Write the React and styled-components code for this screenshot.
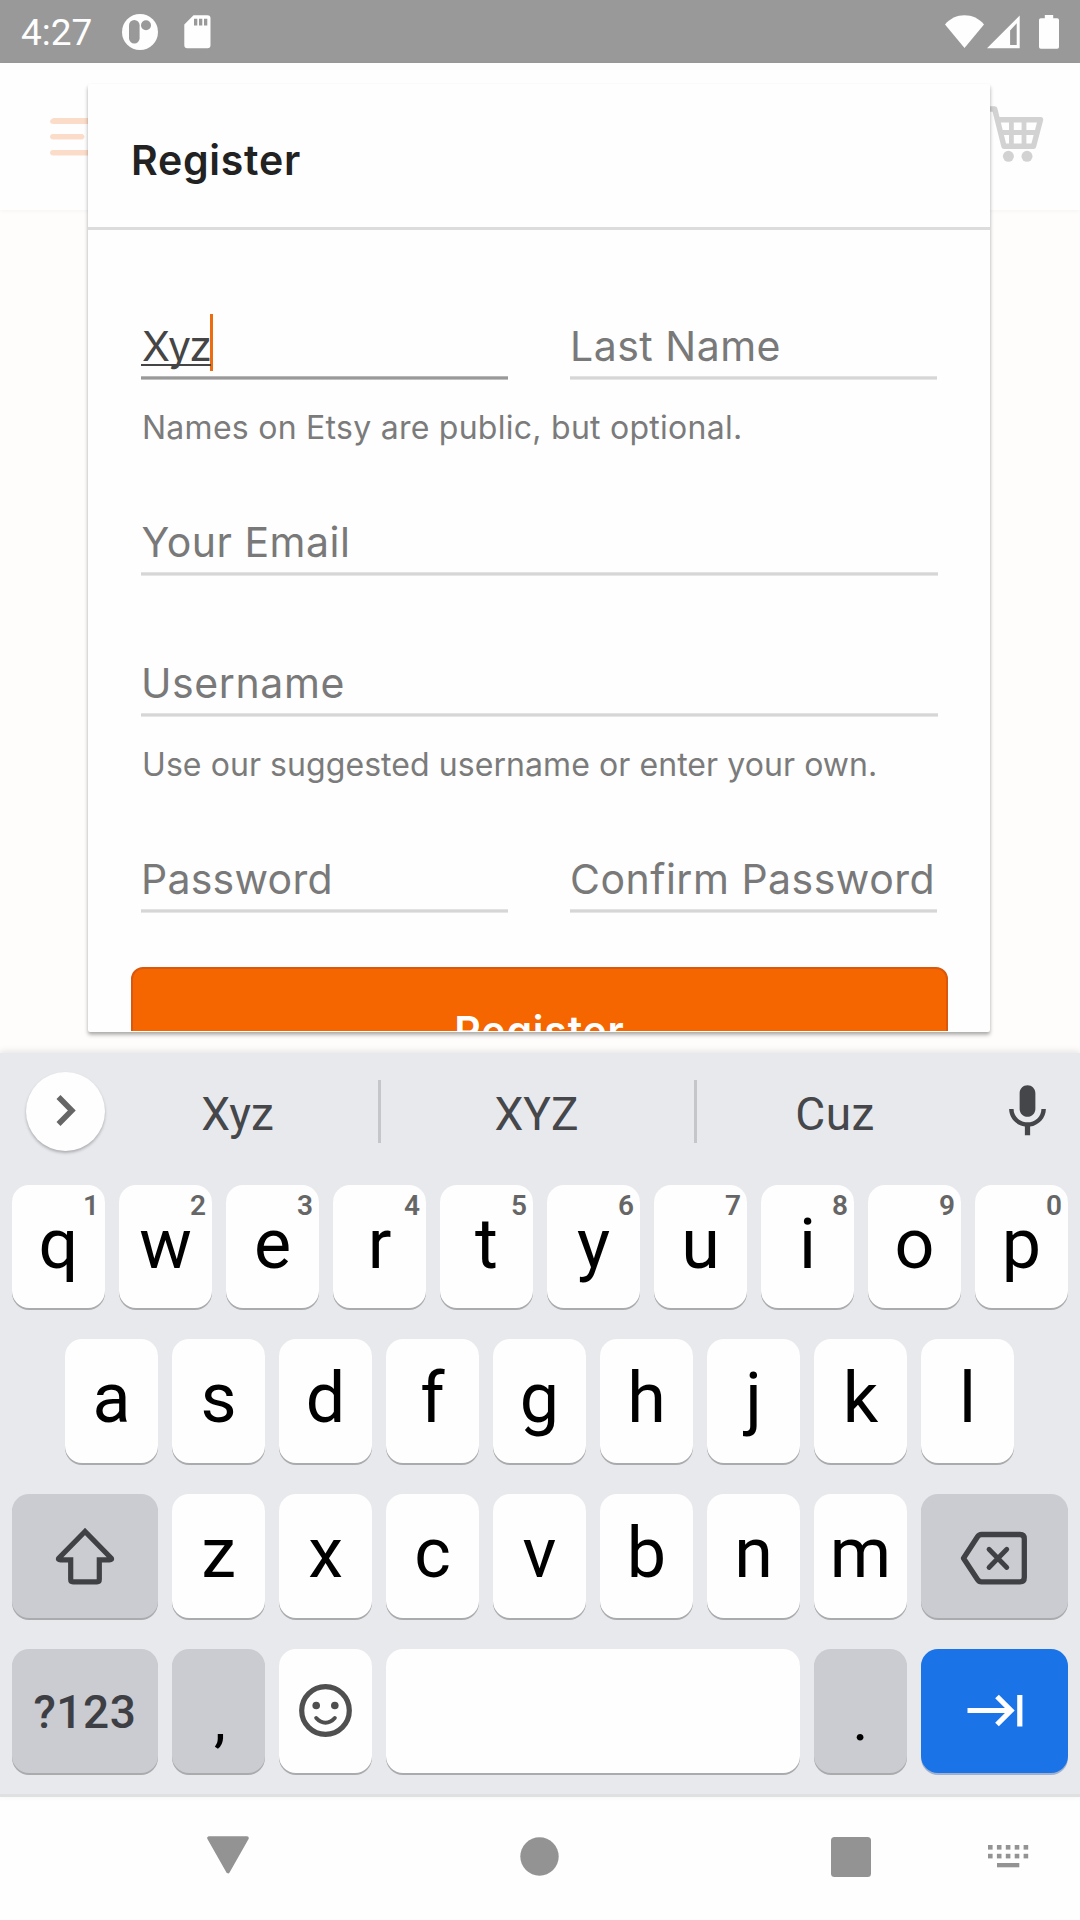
import React from 'react';
import styled, { createGlobalStyle } from 'styled-components';

const GlobalStyle = createGlobalStyle`
  * { box-sizing: border-box; }
  body { margin: 0; background: #fefefe; }
  svg { display: block; flex-shrink: 0; }
`;

const Screen = styled.div`
  display: flex;
  flex-direction: column;
  width: 1080px;
  height: 1920px;
  overflow: hidden;
  background: #fefefe;
  font-family: Roboto, "Liberation Sans", sans-serif;
`;

/* ---------- status bar ---------- */

const StatusBar = styled.header`
  display: flex;
  align-items: center;
  height: 63px;
  padding: 0 21px;
  background: #999999;
  color: #fefefe;
`;

const Clock = styled.span`
  width: 101px;
  padding-top: 3px;
  font-size: 37px;
  line-height: 44px;
`;

const Spacer = styled.div`
  flex: 1;
`;

const Gap = styled.div`
  width: ${(p) => p.$w}px;
`;

/* ---------- app behind the dialog ---------- */

const AppArea = styled.main`
  position: relative;
  height: 990px;
  background: #fefdfb;
`;

const AppBar = styled.div`
  display: flex;
  align-items: center;
  justify-content: space-between;
  height: 147px;
  padding: 0 36px 0 50px;
  background: #fefefe;
  box-shadow: 0 1px 4px rgba(0, 0, 0, 0.04);
`;

const CartSlot = styled.div`
  padding-bottom: 5px;
`;

/* ---------- dialog ---------- */

const Dialog = styled.section`
  position: absolute;
  top: 21px;
  left: 88px;
  width: 902px;
  height: 948px;
  padding-bottom: 1px;
  background: #fefefe;
  border-radius: 2px;
  box-shadow: 0 3px 4px rgba(0, 0, 0, 0.24), 0 2px 3px rgba(0, 0, 0, 0.12);
  font-family: Inter, "Liberation Sans", sans-serif;
`;

const DialogContent = styled.div`
  height: 100%;
  overflow: hidden;
`;

const DialogTitle = styled.h1`
  height: 146px;
  margin: 0;
  padding: 46px 0 0 43px;
  border-bottom: 3px solid #dcdcdc;
  color: #222222;
  font-size: 41px;
  font-weight: 600;
  line-height: 60px;
  letter-spacing: 0.75px;
`;

const Form = styled.form`
  display: flex;
  flex-direction: column;
  padding: 89px 52px 0 53px;
`;

const FieldRow = styled.div`
  display: flex;
  justify-content: space-between;
  margin-top: ${(p) => p.$top || 0}px;
  padding-right: ${(p) => (p.$split ? 1 : 0)}px;
`;

const Field = styled.div`
  width: ${(p) => (p.$half ? '367px' : '100%')};
`;

const FieldText = styled.div`
  height: 57px;
  padding-left: ${(p) => p.$inset || 0}px;
  color: #797979;
  font-size: 41px;
  line-height: 54px;
  letter-spacing: ${(p) => p.$spacing || 0.5}px;
  white-space: nowrap;
`;

const lineColor = (p) => (p.$focused ? '153, 153, 153' : '214, 214, 214');

const FieldLine = styled.div`
  height: 4px;
  background: linear-gradient(
    rgba(${lineColor}, 0.7) 25%,
    rgb(${lineColor}) 25% 75%,
    rgba(${lineColor}, 0.6) 75%
  );
`;

const Composing = styled.span`
  position: relative;
  display: inline-block;
  width: 70px;
  height: 54px;
  padding-left: 1px;
  color: #454545;
  letter-spacing: -1.9px;

  &::after {
    content: '';
    position: absolute;
    left: 0;
    right: 0;
    top: 45px;
    height: 2px;
    background: #454545;
  }
`;

const Caret = styled.span`
  position: absolute;
  left: 69px;
  top: -5px;
  width: 3px;
  height: 57px;
  background: #ee6c10;
`;

const Hint = styled.p`
  margin: 26px 0 -1px;
  padding-left: 1px;
  color: #7b7b7b;
  font-size: 32px;
  line-height: 44px;
  letter-spacing: ${(p) => p.$spacing}px;
  white-space: nowrap;
`;

const SubmitButton = styled.div`
  flex-shrink: 0;
  width: 817px;
  height: 129px;
  margin: 54px 0 0 -10px;
  border: 2px solid #d9580e;
  border-radius: 12px;
  background: #f56500;
  color: #fefefe;
  font-size: 41px;
  font-weight: 600;
  line-height: 125px;
  letter-spacing: 0.8px;
  text-align: center;
`;

/* ---------- keyboard ---------- */

const Keyboard = styled.section`
  position: relative;
  display: flex;
  flex-direction: column;
  height: 744px;
  border-bottom: 3px solid #dfe0e0;
  background: #e8e9ed;
  box-shadow: 0 -2px 6px rgba(120, 110, 120, 0.16);
`;

const SuggestionBar = styled.div`
  display: grid;
  grid-template-columns: 105px 273px 3px 313px 3px 278px 105px;
  align-items: center;
  flex-shrink: 0;
  height: 132px;
  padding-bottom: 16px;
`;

const ExpandButton = styled.div`
  display: flex;
  align-items: center;
  justify-content: center;
  width: 79px;
  height: 79px;
  margin-left: 26px;
  border-radius: 50%;
  background: #fefefe;
  box-shadow: 0 2px 3px rgba(0, 0, 0, 0.25);
`;

const Suggestion = styled.div`
  padding: 5px ${(p) => p.$trim || 0}px 0 0;
  color: #45474b;
  font-size: 46px;
  line-height: 60px;
  letter-spacing: ${(p) => p.$spacing || 0}px;
  text-align: center;
`;

const Divider = styled.div`
  height: 63px;
  background: #c4c6c9;
`;

const MicSlot = styled.div`
  padding-left: 21px;
`;

const Keys = styled.div`
  display: flex;
  flex-direction: column;
  gap: 31px;
`;

const KeyRow = styled.div`
  display: flex;
  justify-content: center;
  gap: 14px;
  height: ${(p) => p.$h || 124}px;
  padding-right: ${(p) => p.$shift || 0}px;
`;

const keyTone = {
  light: '#fefefe',
  dark: '#cbccd1',
  action: '#1b73e8',
};

const KeyCap = styled.div`
  position: relative;
  display: flex;
  align-items: center;
  justify-content: center;
  width: ${(p) => p.$w || 93}px;
  border-radius: 17px;
  background: ${(p) => keyTone[p.$tone || 'light']};
  box-shadow: 0 2px 0 ${(p) => (p.$tone === 'action' ? '#9fb1cd' : '#aaabad')};
`;

const Letter = styled.span`
  padding-bottom: 6px;
  color: #000000;
  font-size: 70px;
  line-height: 84px;
`;

const Punctuation = styled.span`
  padding-top: 18px;
  padding-left: ${(p) => p.$inset || 0}px;
  color: #000000;
  font-size: 60px;
  line-height: 74px;
`;

const ModeLabel = styled.span`
  padding-top: 2px;
  color: #3d3f44;
  font-size: 46px;
  font-weight: 500;
  line-height: 60px;
  letter-spacing: 0.6px;
`;

const Digit = styled.span`
  position: absolute;
  top: 5px;
  right: 6px;
  color: #666666;
  font-size: 28px;
  font-weight: 600;
  line-height: 32px;
`;

/* ---------- navigation bar ---------- */

const NavBar = styled.nav`
  display: flex;
  align-items: center;
  height: 123px;
  padding-bottom: 4px;
  background: #fefefe;
`;

/* The back triangle sits slightly above the other nav icons. */
const BackSlot = styled.div`
  padding-bottom: 4px;
`;

/* ---------- icons ---------- */

const NotificationIcon = () => (
  <svg width="36" height="36" viewBox="0 0 36 36">
    <circle cx="18" cy="18" r="18" fill="#fefefe" />
    <rect x="7" y="6" width="10.6" height="23.5" rx="5.3" fill="#999999" />
    <circle cx="24" cy="11.2" r="5" fill="#999999" />
  </svg>
);

const SdCardIcon = () => (
  <svg width="27" height="34" viewBox="0 0 27 34">
    <path
      fill="#fefefe"
      fillRule="evenodd"
      d="M9.5 0.3H23.5a3 3 0 0 1 3 3V30.3a3 3 0 0 1-3 3H3.3a3 3 0 0 1-3-3V9.5zM10 3.7v6.8h3.3V3.7zM15 3.7v6.8h3.3V3.7zM20 3.7v6.8h3.3V3.7z"
    />
  </svg>
);

const WifiIcon = () => (
  <svg width="39" height="34" viewBox="0 0 39 34">
    <path fill="#fefefe" d="M0 9.5C5 3.5 12 0.3 19.5 0.3S34 3.5 39 9.5L19.5 33z" />
  </svg>
);

const SignalIcon = () => (
  <svg width="33" height="34" viewBox="0 0 33 34">
    <path fill="#fefefe" fillRule="evenodd" d="M32.7 0.5V33.2H0zM29.7 8.3L23.1 15.5V29.9H29.7z" />
  </svg>
);

const BatteryIcon = () => (
  <svg width="20" height="34" viewBox="0 0 20 34">
    <path
      fill="#fefefe"
      d="M5.8 0h8.4v3.3h4a1.8 1.8 0 0 1 1.8 1.8V32a1.8 1.8 0 0 1-1.8 1.8H1.800A1.8 1.8 0 0 1 0 32V5.1a1.8 1.8 0 0 1 1.8-1.8h4z"
    />
  </svg>
);

const MenuIcon = () => (
  <svg width="50" height="38" viewBox="0 0 50 38">
    <g fill="#fbdcc9">
      <path d="M3.5 0H50V6H3.500Q0 5.5 0 3.500T3.500 0z" />
      <path d="M3 16H32.500Q34.500 17 34.500 18.700T32.500 21.500H3Q0 21 0 18.700T3 16z" />
      <path d="M3 32H50V37.500H3Q0 37 0 34.700T3 32z" />
    </g>
  </svg>
);

const CartIcon = () => (
  <svg width="62" height="58" viewBox="982 105 62 58" fill="none" stroke="#d2d2d2">
    <path strokeWidth="5.4" strokeLinejoin="round" d="M984 109H994.7L1004 146.300H1033.500L1040.500 119.700H998" />
    <path strokeWidth="4.8" d="M1011.4 120V146M1024 120V146M1001 132.500H1037" />
    <g fill="#d2d2d2" stroke="none">
      <circle cx="1008.4" cy="156.3" r="5.5" />
      <circle cx="1027" cy="156.3" r="5.5" />
    </g>
  </svg>
);

const ChevronIcon = () => (
  <svg width="22" height="34" viewBox="0 0 22 34">
    <path d="M3.5 3L16.8 16.500L3.500 30" fill="none" stroke="#666666" strokeWidth="5.6" strokeLinecap="butt" />
  </svg>
);

const MicIcon = () => (
  <svg width="63" height="63" viewBox="0 0 24 24" fill="#444649">
    <path d="M12 14c1.66 0 3-1.34 3-3V5c0-1.66-1.34-3-3-3S9 3.34 9 5v6c0 1.66 1.34 3 3 3zm5.3-3c0 3-2.54 5.1-5.3 5.1S6.7 14 6.7 11H5c0 3.41 2.72 6.23 6 6.72V21h2v-3.28c3.28-.48 6-3.3 6-6.72h-1.7z" />
  </svg>
);

const ShiftIcon = () => (
  <svg width="60" height="60" viewBox="55 1525.500 60 60">
    <path
      d="M85 1531L59 1557.500Q57.500 1559.300 60.500 1559.300H70.700V1579Q70.700 1581.300 73 1581.300H97Q99.300 1581.300 99.300 1579V1559.300H109.500Q112.500 1559.300 111 1557.500Z"
      fill="none"
      stroke="#3f4145"
      strokeWidth="5.2"
    />
  </svg>
);

const BackspaceIcon = () => (
  <svg width="70" height="58" viewBox="959.5 1527.500 70 58" fill="none" stroke="#3f4145" strokeWidth="5.3">
    <path
      strokeLinejoin="round"
      d="M981 1535H1019.500Q1023.800 1535 1023.800 1539.300V1578Q1023.800 1582.300 1019.500 1582.300H981Q978.500 1582.300 977 1580L963 1558.700L977 1537.300Q978.500 1535 981 1535Z"
    />
    <path strokeLinecap="round" strokeWidth="4.8" d="M988.5 1549.800L1006.300 1568M1006.300 1549.800L988.500 1568" />
  </svg>
);

const SmileIcon = () => (
  <svg width="54" height="54" viewBox="-26.5 -26.500 54 54">
    <g fill="none" stroke="#4f4f4f">
      <circle r="23.8" strokeWidth="5.2" />
      <path d="M-9.3 7.500Q-5 12.300 0 12.300T9.300 7.500" strokeWidth="4" strokeLinecap="round" />
    </g>
    <circle cx="-9.3" cy="-5" r="3.8" fill="#4f4f4f" />
    <circle cx="9.3" cy="-5" r="3.8" fill="#4f4f4f" />
  </svg>
);

const NextIcon = () => (
  <svg width="56" height="34" viewBox="966.5 1694 56 34" fill="none" stroke="#fefefe" strokeWidth="5.2">
    <path d="M967 1710.500H1010M996.500 1696.500L1010.500 1710.500L996.500 1724.500M1019.300 1695V1726.500" />
  </svg>
);

const BackNavIcon = () => (
  <svg width="42" height="38" viewBox="0 0 42 38">
    <path d="M2 2H40L21 35.500Z" fill="#939393" stroke="#939393" strokeWidth="3.6" strokeLinejoin="round" />
  </svg>
);

const HomeNavIcon = () => (
  <svg width="39" height="39" viewBox="0 0 39 39">
    <circle cx="19.5" cy="19.5" r="19.2" fill="#939393" />
  </svg>
);

const RecentsNavIcon = () => (
  <svg width="40" height="40" viewBox="0 0 40 40">
    <rect width="40" height="40" rx="3.5" fill="#939393" />
  </svg>
);

const KeyboardNavIcon = () => (
  <svg width="41" height="23" viewBox="0 0 41 23" fill="#939393">
    {[0, 8.8].map((y) =>
      [0, 8.9, 17.8, 26.7, 35.6].map((x) => <rect key={`${x}-${y}`} x={x} y={y} width="4.6" height="4.6" />)
    )}
    <rect x="9" y="18" width="22.3" height="4.3" />
  </svg>
);

/* ---------- screen ---------- */

const topRow = ['q', 'w', 'e', 'r', 't', 'y', 'u', 'i', 'o', 'p'];
const homeRow = ['a', 's', 'd', 'f', 'g', 'h', 'j', 'k', 'l'];
const bottomRow = ['z', 'x', 'c', 'v', 'b', 'n', 'm'];

const LetterKey = ({ char, digit }) => (
  <KeyCap>
    <Letter>{char}</Letter>
    {digit !== undefined && <Digit>{digit}</Digit>}
  </KeyCap>
);

const Input = ({ label, half, spacing, inset }) => (
  <Field $half={half}>
    <FieldText $spacing={spacing} $inset={inset}>{label}</FieldText>
    <FieldLine />
  </Field>
);

export default function App() {
  return (
    <Screen>
      <GlobalStyle />
      <StatusBar>
        <Clock>4:27</Clock>
        <NotificationIcon />
        <Gap $w={26} />
        <SdCardIcon />
        <Spacer />
        <WifiIcon />
        <Gap $w={3} />
        <SignalIcon />
        <Gap $w={19} />
        <BatteryIcon />
      </StatusBar>

      <AppArea>
        <AppBar>
          <MenuIcon />
          <CartSlot>
            <CartIcon />
          </CartSlot>
        </AppBar>
        <Dialog>
          <DialogContent>
            <DialogTitle>Register</DialogTitle>
            <Form>
              <FieldRow $split>
                <Field $half>
                  <FieldText>
                    <Composing>
                      Xyz
                      <Caret />
                    </Composing>
                  </FieldText>
                  <FieldLine $focused />
                </Field>
                <Input half label="Last Name" />
              </FieldRow>
              <Hint $spacing={0.26}>Names on Etsy are public, but optional.</Hint>
              <FieldRow $top={66}>
                <Input label="Your Email" inset={0.5} />
              </FieldRow>
              <FieldRow $top={80}>
                <Input label="Username" spacing={0.6} />
              </FieldRow>
              <Hint $spacing={0.07}>Use our suggested username or enter your own.</Hint>
              <FieldRow $top={66} $split>
                <Input half label="Password" spacing={0.25} />
                <Input half label="Confirm Password" />
              </FieldRow>
              <SubmitButton>Register</SubmitButton>
            </Form>
          </DialogContent>
        </Dialog>
      </AppArea>

      <Keyboard>
        <SuggestionBar>
          <ExpandButton>
            <ChevronIcon />
          </ExpandButton>
          <Suggestion $trim={8}>Xyz</Suggestion>
          <Divider />
          <Suggestion $trim={2}>XYZ</Suggestion>
          <Divider />
          <Suggestion $spacing={0.5} $trim={2}>Cuz</Suggestion>
          <MicSlot>
            <MicIcon />
          </MicSlot>
        </SuggestionBar>
        <Keys>
          <KeyRow $h={123}>
            {topRow.map((char, i) => (
              <LetterKey key={char} char={char} digit={(i + 1) % 10} />
            ))}
          </KeyRow>
          <KeyRow $shift={1}>
            {homeRow.map((char) => (
              <LetterKey key={char} char={char} />
            ))}
          </KeyRow>
          <KeyRow>
            <KeyCap $w={146} $tone="dark">
              <ShiftIcon />
            </KeyCap>
            {bottomRow.map((char) => (
              <LetterKey key={char} char={char} />
            ))}
            <KeyCap $w={147} $tone="dark">
              <BackspaceIcon />
            </KeyCap>
          </KeyRow>
          <KeyRow>
            <KeyCap $w={146} $tone="dark">
              <ModeLabel>?123</ModeLabel>
            </KeyCap>
            <KeyCap $tone="dark">
              <Punctuation $inset={3}>,</Punctuation>
            </KeyCap>
            <KeyCap>
              <SmileIcon />
            </KeyCap>
            <KeyCap $w={414} />
            <KeyCap $tone="dark">
              <Punctuation>.</Punctuation>
            </KeyCap>
            <KeyCap $w={147} $tone="action">
              <NextIcon />
            </KeyCap>
          </KeyRow>
        </Keys>
      </Keyboard>

      <NavBar>
        <Gap $w={207} />
        <BackSlot>
          <BackNavIcon />
        </BackSlot>
        <Gap $w={271} />
        <HomeNavIcon />
        <Gap $w={272} />
        <RecentsNavIcon />
        <Gap $w={116.5} />
        <KeyboardNavIcon />
      </NavBar>
    </Screen>
  );
}
